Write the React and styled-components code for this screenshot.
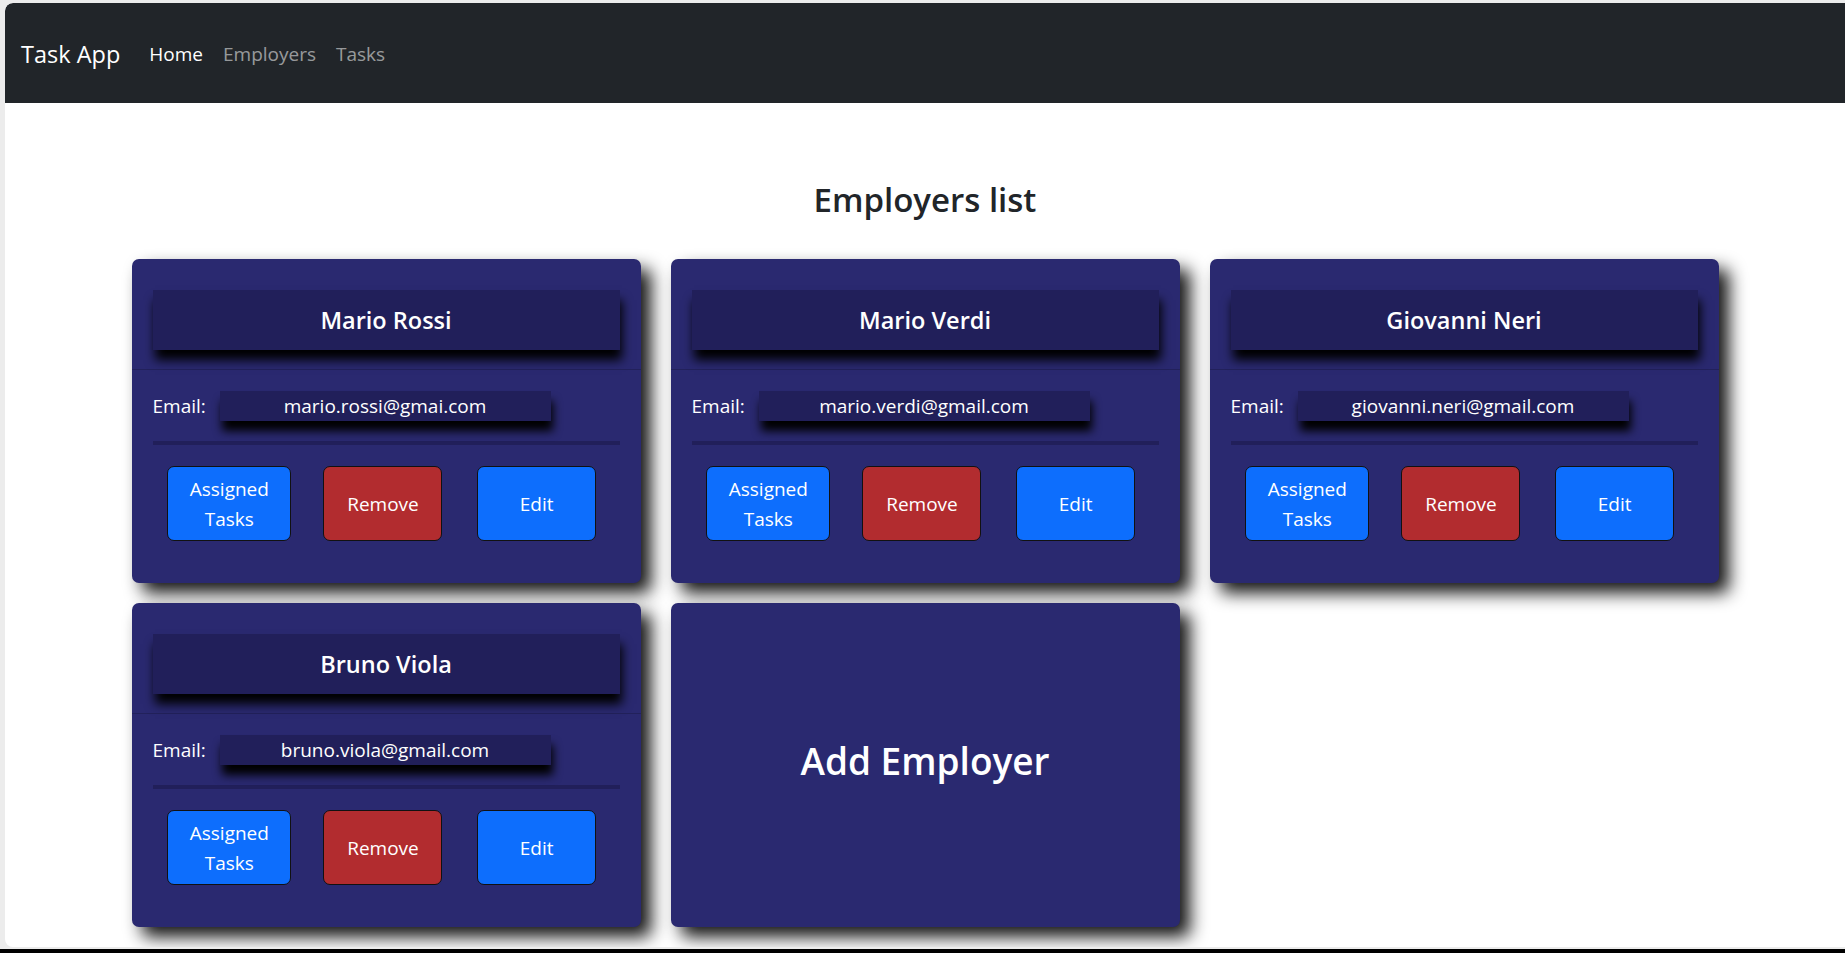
import styled, { createGlobalStyle } from "styled-components";

const GlobalStyle = createGlobalStyle`
  html, body {
    margin: 0;
    padding: 0;
  }
  body {
    background: #ececec;
    font-family: "Segoe UI", "Open Sans", "Noto Sans", sans-serif;
    overflow: hidden;
  }
  * {
    box-sizing: border-box;
  }
`;

const Frame = styled.div`
  display: flex;
  flex-direction: column;
  height: 953px;
  padding: 3px 0 0 5px;
  background: #ececec;
`;

const Window = styled.div`
  height: 944px;
  background: #fff;
  border-radius: 8px 0 0 8px;
  overflow: hidden;
`;

const BottomStrip = styled.div`
  margin: 2px 0 0 -5px;
  flex: 1;
  background: #000;
`;

const Navbar = styled.nav`
  display: flex;
  align-items: center;
  height: 100px;
  padding: 2px 16px 0;
  background: #212529;
  border-radius: 8px 0 0 0;
`;

const Brand = styled.span`
  font-size: 23.5px;
  color: #fff;
  margin-right: 19px;
`;

const NavLink = styled.a`
  font-size: 19px;
  padding: 0 10px;
  color: ${(p) => (p.$active ? "#fff" : "rgba(255, 255, 255, 0.55)")};
  text-decoration: none;
`;

const Main = styled.main`
  display: flex;
  flex-direction: column;
  align-items: center;
`;

const Title = styled.h3`
  margin: 76px 0 38px;
  font-size: 33px;
  line-height: 42px;
  font-weight: 600;
  color: #212529;
`;

const Grid = styled.div`
  display: grid;
  grid-template-columns: repeat(3, 509px);
  column-gap: 30px;
  row-gap: 20px;
`;

const Card = styled.div`
  display: flex;
  flex-direction: column;
  background: #2a2970;
  border-radius: 7px;
  box-shadow: 10px 10px 17px rgba(0, 0, 0, 0.92);
  color: #fff;
`;

const CardHeader = styled.div`
  padding: 31px 21px 19px;
  border-bottom: 1px solid rgba(0, 0, 0, 0.18);
`;

const NameBox = styled.div`
  display: flex;
  align-items: center;
  justify-content: center;
  height: 60px;
  background: #211f5a;
  box-shadow: 2px 10px 10px #000;
  font-size: 23.5px;
  font-weight: 600;
`;

const CardBody = styled.div`
  padding: 21px 21px 42px;
`;

const EmailRow = styled.div`
  display: flex;
  align-items: center;
  height: 30px;
  font-size: 19px;
`;

const EmailLabel = styled.span`
  width: 67px;
`;

const EmailBox = styled.div`
  display: flex;
  align-items: center;
  justify-content: center;
  width: 331px;
  height: 30px;
  background: #211f5a;
  box-shadow: 2px 10px 10px #000;
`;

const Bar = styled.div`
  height: 4px;
  margin: 20px 0 21px;
  background: #211f5a;
`;

const Actions = styled.div`
  display: grid;
  grid-template-columns: repeat(3, 1fr);
  justify-items: center;
  padding-right: 6px;
`;

const Button = styled.button`
  width: ${(p) => p.$width}px;
  height: 75px;
  padding: 7px 15px;
  border: 1px solid #111;
  border-radius: 7px;
  background: ${(p) => (p.$danger ? "#b22c2f" : "#0d6efd")};
  color: #fff;
  font-family: inherit;
  font-size: 19px;
  line-height: 30px;
`;

const AddCard = styled(Card)`
  align-items: center;
  justify-content: center;
  padding-bottom: 10px;
  font-size: 37px;
  font-weight: 600;
`;

const employers = [
  { id: 1, name: "Mario Rossi", email: "mario.rossi@gmai.com" },
  { id: 2, name: "Mario Verdi", email: "mario.verdi@gmail.com" },
  { id: 3, name: "Giovanni Neri", email: "giovanni.neri@gmail.com" },
  { id: 4, name: "Bruno Viola", email: "bruno.viola@gmail.com" },
];

function EmployerCard({ employer }) {
  return (
    <Card>
      <CardHeader>
        <NameBox>{employer.name}</NameBox>
      </CardHeader>
      <CardBody>
        <EmailRow>
          <EmailLabel>Email:</EmailLabel>
          <EmailBox>{employer.email}</EmailBox>
        </EmailRow>
        <Bar />
        <Actions>
          <Button $width={124}>Assigned Tasks</Button>
          <Button $width={119} $danger>
            Remove
          </Button>
          <Button $width={119}>Edit</Button>
        </Actions>
      </CardBody>
    </Card>
  );
}

export default function App() {
  return (
    <>
      <GlobalStyle />
      <Frame>
        <Window>
          <Navbar>
            <Brand>Task App</Brand>
            <NavLink $active>Home</NavLink>
            <NavLink>Employers</NavLink>
            <NavLink>Tasks</NavLink>
          </Navbar>
          <Main>
            <Title>Employers list</Title>
            <Grid>
              {employers.map((e) => (
                <EmployerCard key={e.id} employer={e} />
              ))}
              <AddCard>Add Employer</AddCard>
            </Grid>
          </Main>
        </Window>
        <BottomStrip />
      </Frame>
    </>
  );
}
